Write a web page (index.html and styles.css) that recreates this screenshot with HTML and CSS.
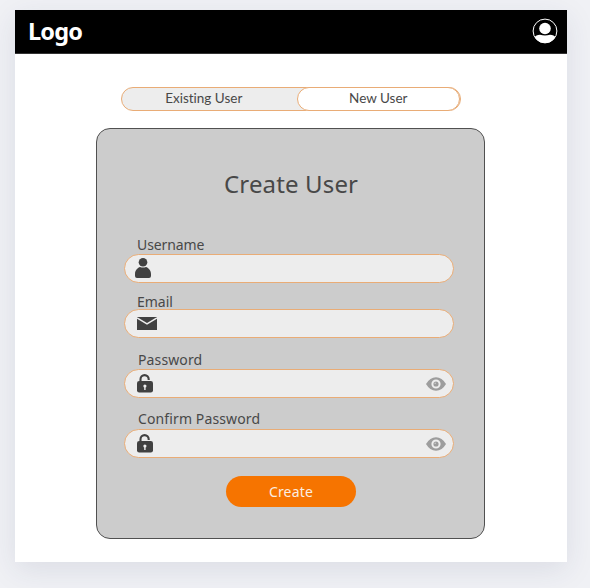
FILE: index.html
```html
<!DOCTYPE html>
<html lang="en">
<head>
<meta charset="utf-8">
<title>Create User</title>
<link rel="stylesheet" href="styles.css">
</head>
<body>
<svg class="symbols" aria-hidden="true">
  <symbol id="lock" viewBox="0 0 16 19">
    <path d="M3.5 8V5.200a4.100 4.100 0 0 1 8.200 0V6" fill="none" stroke="#414141" stroke-width="2.100"/>
    <rect y="7" width="16" height="11.5" rx="2.2" fill="#414141"/>
    <circle cx="7.9" cy="12" r="1.6" fill="#eee"/>
    <path d="M7.2 12h1.4v4H7.2z" fill="#eee"/>
  </symbol>
  <symbol id="eye" viewBox="0 0 20 14">
    <path d="M0 7Q4 .2 10 .2T20 7Q16 13.8 10 13.8T0 7Z" fill="#9d9d9d"/>
    <circle cx="10" cy="7" r="3.600" fill="#9d9d9d" stroke="#eee" stroke-width="2"/>
    <circle cx="9.200" cy="6.200" r=".8" fill="#ccc"/>
  </symbol>
</svg>
<main class="window">
  <header class="topbar">
    <span class="logo">Logo</span>
    <svg class="avatar" viewBox="0 0 26 26">
      <clipPath id="disc"><circle cx="13" cy="13" r="12"/></clipPath>
      <circle cx="13" cy="13" r="11.9" fill="#000" stroke="#fff"/>
      <circle cx="13" cy="10.5" r="5.8" fill="#fff"/>
      <path clip-path="url(#disc)" d="M2 26v-6q2-3.200 6-3.200 5 1.600 10 0 4 0 6 3.200v6z" fill="#fff"/>
    </svg>
  </header>
  <nav class="tabs">
    <span class="tab">Existing User</span>
    <span class="tab selected">New User</span>
  </nav>
  <form class="card">
    <h1 class="title">Create User</h1>
    <div class="field username">
      <label class="label">Username</label>
      <div class="input">
        <svg class="person" viewBox="0 0 16 20"><circle cx="8" cy="4.3" r="4.3" fill="#414141"/><path d="M0 18v-2C0 12 3 9.500 5 9q3 1 6 0c2 .5 5 3 5 7v2q0 2-2 2H2q-2 0-2-2Z" fill="#414141"/></svg>
      </div>
    </div>
    <div class="field email">
      <label class="label">Email</label>
      <div class="input">
        <svg class="mail" viewBox="0 0 20 13"><path d="M0 0h20v13H0z" fill="#414141"/><path d="M0 .8l10 6 10-6" fill="none" stroke="#eee" stroke-width="1.5"/></svg>
      </div>
    </div>
    <div class="field password">
      <label class="label">Password</label>
      <div class="input">
        <svg class="lock"><use href="#lock"/></svg>
        <svg class="eye"><use href="#eye"/></svg>
      </div>
    </div>
    <div class="field confirm">
      <label class="label">Confirm Password</label>
      <div class="input">
        <svg class="lock"><use href="#lock"/></svg>
        <svg class="eye"><use href="#eye"/></svg>
      </div>
    </div>
    <button class="create" type="button">Create</button>
  </form>
</main>
</body>
</html>
```
FILE: styles.css
```css
* { box-sizing: border-box; }
body {
  margin: 0;
  padding: 10px 23px 26px 15px;
  height: 588px;
  overflow: hidden;
  background: #f0f1f5;
  font-family: "Noto Sans", sans-serif;
  color: #484848;
}
.symbols { display: none; }
.window {
  height: 552px;
  background: #fff;
  box-shadow: 0 8px 28px rgba(40, 50, 90, .1);
}
.topbar {
  display: flex;
  align-items: center;
  justify-content: space-between;
  height: 44px;
  padding: 0 9px 2px 13px;
  background: #000;
  border-bottom: 1px solid #333;
}
.logo {
  color: #fff;
  font-size: 23.5px;
  font-weight: 700;
  line-height: 40px;
  letter-spacing: -.8px;
}
.avatar { width: 26px; height: 26px; }
.tabs {
  display: flex;
  width: 340px;
  height: 24px;
  margin: 33px 0 0 106px;
  background: #ededed;
  border: 1px solid #e9ac76;
  border-radius: 12px;
  font-family: Lato, sans-serif;
  font-size: 13.5px;
  font-variant-ligatures: none;
  line-height: 20px;
  text-align: center;
}
.tab { width: 175px; padding-right: 11px; }
.tab.selected {
  width: 164px;
  height: 24px;
  margin: -1px 0 0;
  padding: 0;
  background: #fff;
  border: 1px solid #e9ac76;
  border-radius: 12px;
}
.card {
  display: flex;
  flex-direction: column;
  width: 389px;
  height: 411px;
  margin: 17px 0 0 81px;
  padding: 0 31px 0 27px;
  background: #ccc;
  border: 1px solid #505050;
  border-radius: 14px;
}
.title {
  margin: 38px 0 43px -1px;
  padding-left: 101px;
  font-size: 24px;
  font-weight: 400;
  line-height: 34px;
  letter-spacing: .15px;
  white-space: nowrap;
}
.field { display: flex; flex-direction: column; }
.label {
  height: 18px;
  padding-left: 13px;
  margin-bottom: -1px;
  font-size: 14px;
  line-height: 18px;
}
.username { margin-top: -8px; }
.username .label { height: 19px; letter-spacing: -.1px; }
.email { margin-top: 10px; }
.email .label { height: 17px; }
.password { margin-top: 13px; }
.password .label { height: 19px; }
.confirm { margin-top: 12px; }
.confirm .label { height: 20px; }
.password .label, .confirm .label { padding-left: 14px; letter-spacing: .12px; }
.input {
  display: flex;
  align-items: center;
  justify-content: space-between;
  width: 330px;
  height: 29px;
  padding: 0 7px 0 12px;
  background: #ededed;
  border: 1px solid #e9ac76;
  border-radius: 15px;
}
.person { width: 16px; height: 20px; margin: -1px 0 0 -2px; }
.mail { width: 20px; height: 13px; }
.lock { width: 16px; height: 19px; }
.eye { width: 20px; height: 14px; }
.create {
  width: 130px;
  height: 31px;
  margin: 18px 0 0 102px;
  padding: 0;
  color: #fbeee0;
  background: #f67400;
  border: 0;
  border-radius: 16px;
  font: 14px/31px "Noto Sans", sans-serif;
  letter-spacing: .2px;
}
```
